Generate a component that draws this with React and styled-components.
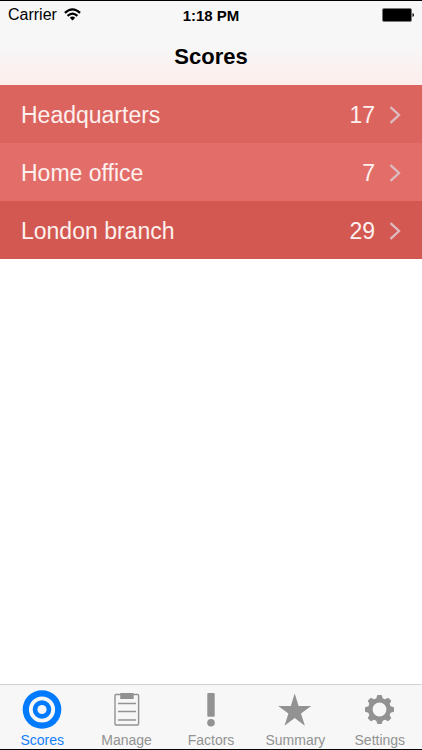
import { useState } from "react";
import styled, { createGlobalStyle } from "styled-components";

const GlobalStyle = createGlobalStyle`
    * {
        box-sizing: border-box;
    }

    body {
        margin: 0;
        background: #fff;
        font-family: "Liberation Sans", Arial, sans-serif;
    }
`;

const Screen = styled.div`
    display: flex;
    flex-direction: column;
    min-height: 100vh;
    border-top: 1px solid #000;
    border-bottom: 1px solid #000;
`;

const Header = styled.header`
    background: linear-gradient(#f7f7f8 50%, #fdeeec);
`;

const StatusBar = styled.div`
    display: grid;
    grid-template-columns: 1fr auto 1fr;
    align-items: center;
    height: 28px;
    padding: 0 8px;
    color: #000;
`;

const Carrier = styled.span`
    display: flex;
    align-items: center;
    gap: 7px;
    font-size: 16px;
`;

const Time = styled.span`
    font-size: 15px;
    font-weight: bold;
`;

const Battery = styled.svg`
    justify-self: end;
`;

const Title = styled.h1`
    margin: 0;
    height: 56px;
    font-size: 22px;
    line-height: 56px;
    text-align: center;
    color: #000;
`;

const Main = styled.main`
    flex: 1;
`;

const List = styled.ul`
    margin: 0;
    padding: 0;
    list-style: none;
`;

const Row = styled.button`
    display: flex;
    align-items: center;
    width: 100%;
    height: 58px;
    padding: 2px 21px 0 21px;
    border: 0;
    background: ${({ $color }) => $color};
    color: #fdf0ee;
    font-family: inherit;
    font-size: 23px;
    text-align: left;
    cursor: pointer;
`;

const Name = styled.span`
    flex: 1;
`;

const Score = styled.span`
    margin-right: 14px;
`;

const TabBar = styled.nav`
    display: flex;
    height: 65px;
    border-top: 1px solid #d2d2d3;
    background: #f7f7f7;
`;

const Tab = styled.button`
    display: flex;
    flex: 1;
    flex-direction: column;
    align-items: center;
    padding: 4px 0 0;
    border: 0;
    background: none;
    color: ${({ $active }) => ($active ? "#147efb" : "#929292")};
    font-family: inherit;
    font-size: 14px;
    line-height: 18px;
    cursor: pointer;
`;

const TabIcon = styled.svg`
    flex-shrink: 0;
    width: 40px;
    height: 42px;
`;

const WifiIcon = () => (
    <svg width="17" height="14" viewBox="0 0 17 14" fill="none" stroke="#000" strokeWidth="2.2" aria-hidden="true">
        <path d="M0.9 4.9 Q8.5 -2 16.1 4.9" />
        <path d="M3.6 7.9 Q8.5 3.4 13.4 7.9" />
        <path d="M8.5 12.4 L5.8 9.8 Q8.5 7.3 11.2 9.8 Z" fill="#000" stroke="none" />
    </svg>
);

const BatteryIcon = () => (
    <Battery width="32" height="15" viewBox="0 0 32 15" aria-hidden="true">
        <rect x="0.5" y="0.5" width="29" height="13" rx="1.5" fill="#000" stroke="#777" />
        <path d="M30.5 5 Q32 5.4 32 7 Q32 8.6 30.5 9 Z" fill="#000" />
    </Battery>
);

const Chevron = () => (
    <svg width="12" height="18" viewBox="0 0 12 18" fill="none" stroke="#dcbcc0" strokeWidth="2.3" aria-hidden="true">
        <path d="M1.5 1.2 L10 9 L1.5 16.8" />
    </svg>
);

const IconBox = ({ children }) => (
    <TabIcon viewBox="0 0 40 42" fill="currentColor" aria-hidden="true">
        {children}
    </TabIcon>
);

const TargetIcon = () => (
    <IconBox>
        <circle cx="20" cy="20.5" r="19.3" fill="#007aff" />
        <circle cx="20" cy="20.5" r="11.2" fill="#007aff" stroke="#f7f7f7" strokeWidth="3.8" />
        <circle cx="20" cy="20.5" r="4.6" fill="#f7f7f7" />
    </IconBox>
);

const ClipboardIcon = () => (
    <IconBox>
        <rect x="8" y="5.5" width="23.6" height="30.5" rx="1" fill="none" stroke="currentColor" strokeWidth="1.4" />
        <rect x="13.2" y="4" width="13.5" height="6" />
        <path d="M11 14.5 H29 M11 22.5 H29 M11 31 H29" stroke="currentColor" strokeWidth="1.4" />
    </IconBox>
);

const ExclamationIcon = () => (
    <IconBox>
        <rect x="16.3" y="4" width="7.4" height="23.8" rx="1" />
        <circle cx="20" cy="33.8" r="3.8" />
    </IconBox>
);

const StarIcon = () => (
    <IconBox>
        <path d="M19.7 4.6 L23.6 17 H36.2 L26 24.4 L29.9 36.7 L19.7 29 L9.5 36.7 L13.4 24.4 L3.2 17 H15.8 Z" />
    </IconBox>
);

const GearIcon = () => (
    <IconBox>
        <circle cx="19.5" cy="20.5" r="9.2" fill="none" stroke="currentColor" strokeWidth="4.6" />
        {[0, 45, 90, 135, 180, 225, 270, 315].map((angle) => (
            <path
                key={angle}
                d="M15.8 11.5 L17 6.8 Q17.2 6 18 6 H21 Q21.8 6 22 6.8 L23.2 11.5 Z"
                transform={`rotate(${angle} 19.5 20.5)`}
            />
        ))}
    </IconBox>
);

const offices = [
    { name: "Headquarters", score: 17, color: "#dc645f" },
    { name: "Home office", score: 7, color: "#e36e69" },
    { name: "London branch", score: 29, color: "#d35851" },
];

const tabs = [
    { name: "Scores", Icon: TargetIcon },
    { name: "Manage", Icon: ClipboardIcon },
    { name: "Factors", Icon: ExclamationIcon },
    { name: "Summary", Icon: StarIcon },
    { name: "Settings", Icon: GearIcon },
];

export default function App() {
    const [active, setActive] = useState("Scores");

    return <>
        <GlobalStyle />
        <Screen>
            <Header>
                <StatusBar>
                    <Carrier>Carrier <WifiIcon /></Carrier>
                    <Time>1:18 PM</Time>
                    <BatteryIcon />
                </StatusBar>
                <Title>Scores</Title>
            </Header>
            <Main>
                <List>
                    {offices.map(({ name, score, color }) => (
                        <li key={name}>
                            <Row type="button" $color={color}>
                                <Name>{name}</Name>
                                <Score>{score}</Score>
                                <Chevron />
                            </Row>
                        </li>
                    ))}
                </List>
            </Main>
            <TabBar>
                {tabs.map(({ name, Icon }) => (
                    <Tab
                        key={name}
                        type="button"
                        $active={name === active}
                        aria-current={name === active ? "page" : undefined}
                        onClick={() => setActive(name)}
                    >
                        <Icon />
                        {name}
                    </Tab>
                ))}
            </TabBar>
        </Screen>
    </>;
}
